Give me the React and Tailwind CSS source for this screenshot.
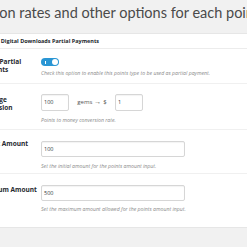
export default function App() {
  const label = "text-[6.5px] leading-[8px] font-bold text-[#23282d]";
  const desc = "text-[5.2px] leading-[6px] italic text-[#8a8a8a]";
  const input =
    "border border-[#d6d6d6] rounded-[2px] bg-white text-[5.5px] text-[#32373c] pl-[2px] flex items-center shadow-[inset_0_1px_1px_rgba(0,0,0,0.05)]";
  return (
    <div
      className="w-[247px] h-[247px] overflow-hidden bg-[#f1f1f1]"
      style={{ fontFamily: '"Open Sans", "Liberation Sans", sans-serif' }}
    >
      <div
        className="h-[33px] pt-[3px] ml-[-78px] whitespace-nowrap text-[14.5px] leading-[20px] text-[#4a4a4a]"
        style={{ fontFamily: 'Lato, "Open Sans", sans-serif' }}
      >
        Set conversion rates and other options for each points type
      </div>
      <div className="bg-white border-y border-[#e6e6e6]">
        <div className="h-[15px] border-b border-[#ececec] flex items-center ml-[-16px] whitespace-nowrap text-[5.5px] font-bold text-[#23282d]">
          Gems Digital Downloads Partial Payments
        </div>
        <div className="ml-[-24px]">
          {/* Row 1 */}
          <div className="flex border-b border-[#f0f0f0] h-[35px]">
            <div className={`w-[63px] shrink-0 pt-[9px] ${label}`}>Enable Partial Payments</div>
            <div className="ml-[2px] pt-[9px]">
              <div className="relative w-[18px] h-[8px] rounded-full bg-[#2a96d4]">
                <div className="absolute left-[4px] top-[2.5px] w-[0.8px] h-[3px] bg-white" />
                <div className="absolute right-[1px] top-[1px] w-[6px] h-[6px] rounded-full bg-white" />
              </div>
              <div className={`mt-[4px] whitespace-nowrap ${desc}`}>
                Check this option to enable this points type to be used as partial payment.
              </div>
            </div>
          </div>
          {/* Row 2 */}
          <div className="flex border-b border-[#f0f0f0] h-[46px]">
            <div className={`w-[63px] shrink-0 pt-[12px] ${label}`}>Exchange Conversion</div>
            <div className="ml-[2px] pt-[10px]">
              <div className="flex items-center">
                <div className={`w-[28px] h-[17px] ${input}`}>100</div>
                <div className="w-[46px] flex items-center justify-center text-[6px] text-[#555]">
                  gems <span className="mx-[2px] text-[7px]">→</span> $
                </div>
                <div className={`w-[28px] h-[17px] ${input}`}>1</div>
              </div>
              <div className={`mt-[6px] whitespace-nowrap ${desc}`}>Points to money conversion rate.</div>
            </div>
          </div>
          {/* Row 3 */}
          <div className="flex border-b border-[#f0f0f0] h-[44px]">
            <div className={`w-[63px] shrink-0 pt-[10px] whitespace-nowrap ${label}`}>Default Amount</div>
            <div className="ml-[2px] pt-[11px]">
              <div className={`w-[144px] h-[16px] ${input}`}>100</div>
              <div className={`mt-[6px] whitespace-nowrap ${desc}`}>Set the initial amount for the points amount input.</div>
            </div>
          </div>
          {/* Row 4 */}
          <div className="flex h-[53px]">
            <div className={`w-[63px] shrink-0 pt-[12px] whitespace-nowrap ${label}`}>Maximum Amount</div>
            <div className="ml-[2px] pt-[11px]">
              <div className={`w-[144px] h-[16px] ${input}`}>500</div>
              <div className={`mt-[5px] whitespace-nowrap ${desc}`}>Set the maximum amount allowed for the points amount input.</div>
            </div>
          </div>
        </div>
      </div>
    </div>
  );
}
